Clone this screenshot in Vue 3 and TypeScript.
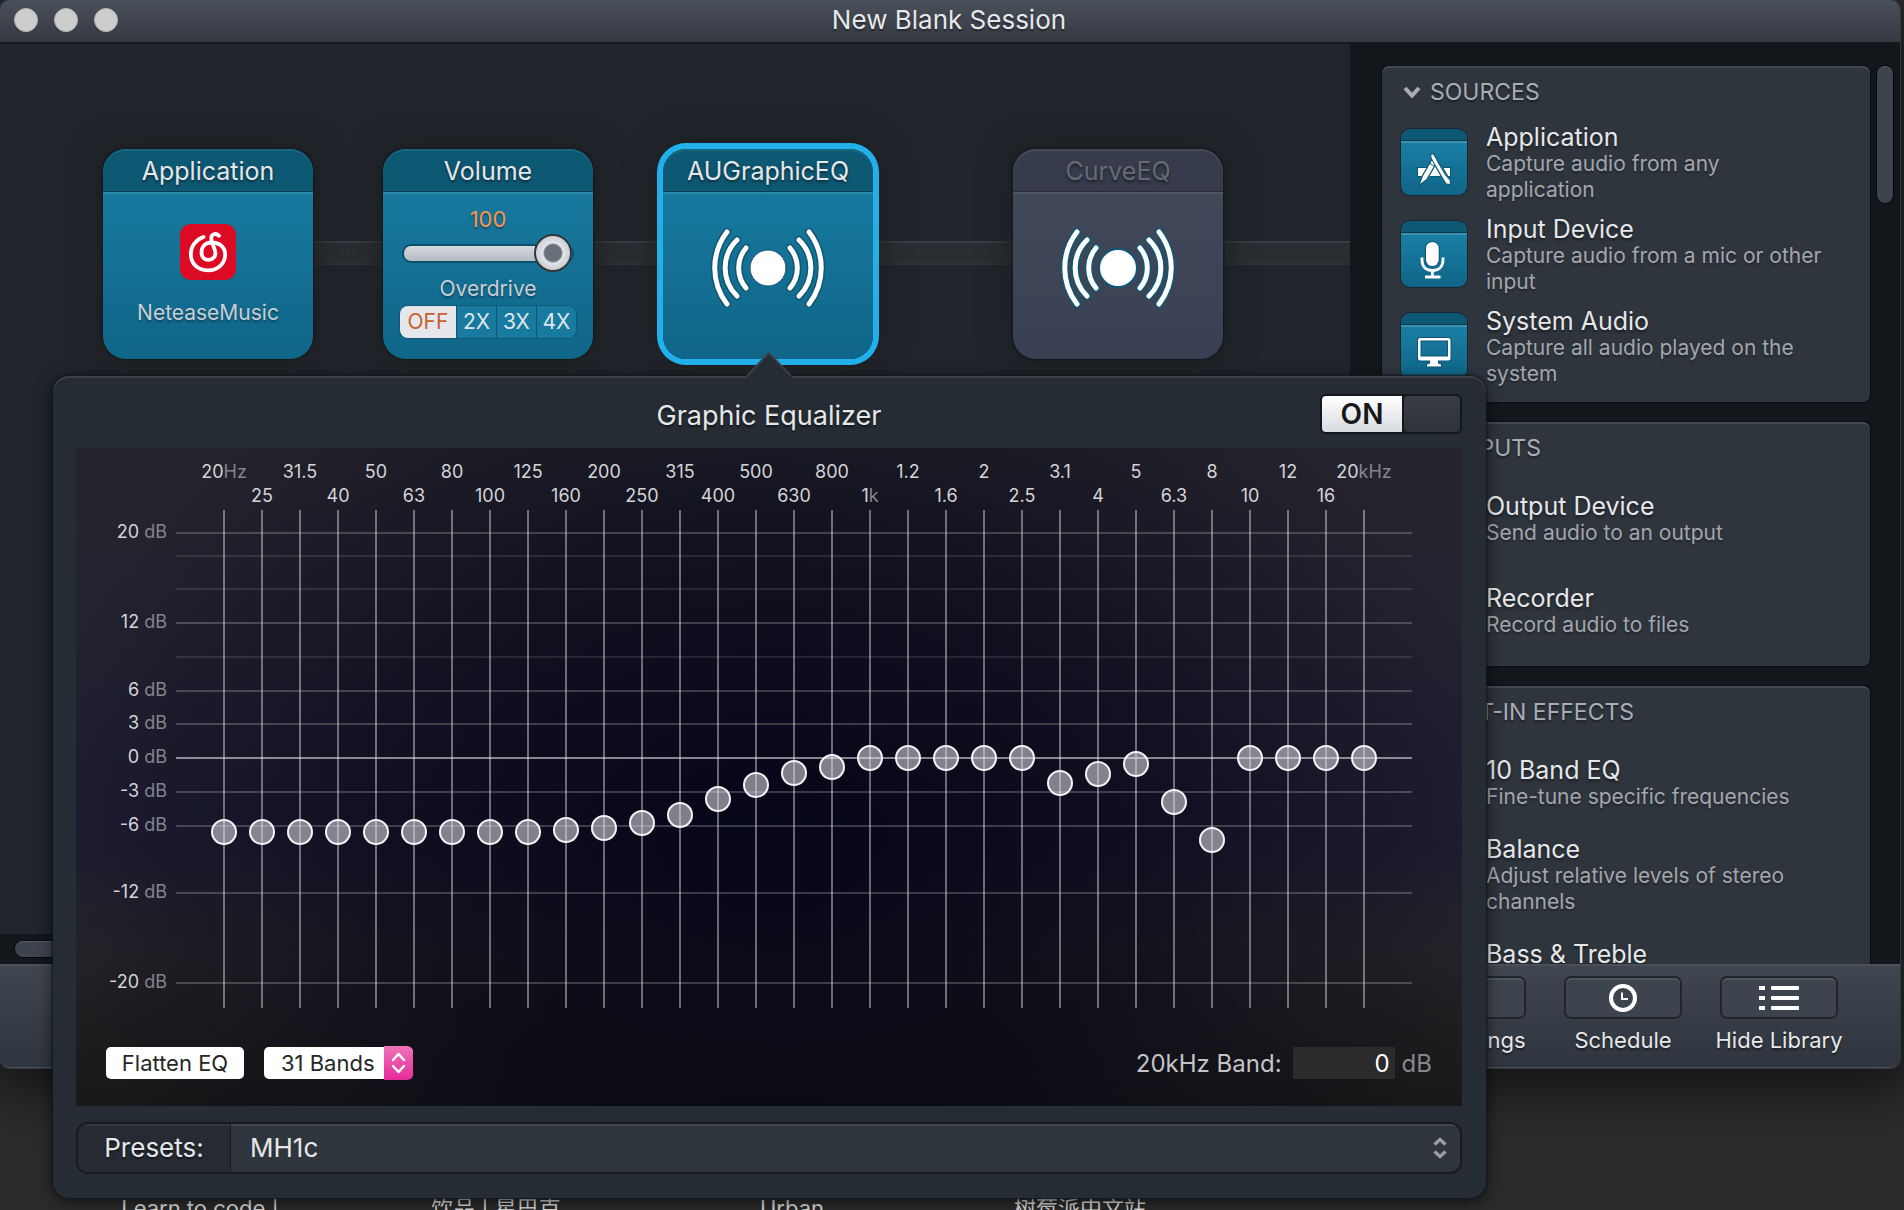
<script setup lang="ts">
import { ref } from 'vue'

interface Band { label: string; unit?: string; gain: number }
interface LibraryItem { title: string; text: string; icon: 'app' | 'mic' | 'screen' | 'blank' }
interface LibrarySection { name: string; items: LibraryItem[] }

const sections: LibrarySection[] = [
  {
    name: 'SOURCES',
    items: [
      { title: 'Application', text: 'Capture audio from any application', icon: 'app' },
      { title: 'Input Device', text: 'Capture audio from a mic or other input', icon: 'mic' },
      { title: 'System Audio', text: 'Capture all audio played on the system', icon: 'screen' },
    ],
  },
  {
    name: 'OUTPUTS',
    items: [
      { title: 'Output Device', text: 'Send audio to an output', icon: 'blank' },
      { title: 'Recorder', text: 'Record audio to files', icon: 'blank' },
    ],
  },
  {
    name: 'BUILT-IN EFFECTS',
    items: [
      { title: '10 Band EQ', text: 'Fine-tune specific frequencies', icon: 'blank' },
      { title: 'Balance', text: 'Adjust relative levels of stereo channels', icon: 'blank' },
      { title: 'Bass & Treble', text: '', icon: 'blank' },
    ],
  },
]

const bands = ref<Band[]>([
  { label: '20', unit: 'Hz', gain: -6.6 },
  { label: '25', gain: -6.6 },
  { label: '31.5', gain: -6.6 },
  { label: '40', gain: -6.6 },
  { label: '50', gain: -6.6 },
  { label: '63', gain: -6.6 },
  { label: '80', gain: -6.6 },
  { label: '100', gain: -6.6 },
  { label: '125', gain: -6.6 },
  { label: '160', gain: -6.4 },
  { label: '200', gain: -6.2 },
  { label: '250', gain: -5.8 },
  { label: '315', gain: -5.1 },
  { label: '400', gain: -3.6 },
  { label: '500', gain: -2.4 },
  { label: '630', gain: -1.3 },
  { label: '800', gain: -0.8 },
  { label: '1', unit: 'k', gain: 0 },
  { label: '1.2', gain: 0 },
  { label: '1.6', gain: 0 },
  { label: '2', gain: 0 },
  { label: '2.5', gain: 0 },
  { label: '3.1', gain: -2.2 },
  { label: '4', gain: -1.4 },
  { label: '5', gain: -0.5 },
  { label: '6.3', gain: -3.9 },
  { label: '8', gain: -7.3 },
  { label: '10', gain: 0 },
  { label: '12', gain: 0 },
  { label: '16', gain: 0 },
  { label: '20', unit: 'kHz', gain: 0 },
])

const labelled = [20, 12, 6, 3, 0, -3, -6, -12, -20]
const levels = [20, 18, 15, 12, 9, 6, 3, 0, -3, -6, -12, -20]
const levelTop = (db: number) => ({ top: `${((20 - db) / 40) * 100}%` })
const lineClass = (db: number) => (db === 0 ? 'zero' : labelled.includes(db) ? '' : 'minor')

const volume = ref(100)
const overdrive = ref('OFF')
const enabled = ref(true)
const lastBand = ref('0')
const desktopLabels = ['Learn to code |', '饮品 | 星巴克', 'Urban', '树莓派中文站']

const arcs =
  'M-41-36A59 59 0 0 0-41 36M-31-28A39 39 0 0 0-31 28M-22-20A31 31 0 0 0-22 20' +
  'M41-36A59 59 0 0 1 41 36M31-28A39 39 0 0 1 31 28M22-20A31 31 0 0 1 22 20'

function flatten() {
  bands.value.forEach((b) => (b.gain = 0))
}
</script>

<template>
  <div class="desktop">
    <main class="window">
      <header class="titlebar">
        <div class="lights">
          <button aria-label="Close"></button>
          <button aria-label="Minimize"></button>
          <button aria-label="Zoom"></button>
        </div>
        <h1>New Blank Session</h1>
      </header>

      <div class="content">
        <section class="stage">
          <div class="canvas">
            <div class="wire"></div>
            <div class="chain">
              <article class="node">
                <h2>Application</h2>
                <div class="node-body source">
                  <svg class="logo" viewBox="0 0 56 56">
                    <rect width="56" height="56" rx="11" fill="#dd0a24" />
                    <path
                      d="M23.5 13C15 16 10.8 23 10.8 30C10.8 40 18 46.3 28 46.3C38.5 46.3 45.2 39 45.2 30.5C45.2 23 39.5 18.5 31.5 18.5C25 18.5 21.5 23 21.5 28.5C21.5 33 24.5 35.8 28.5 35.8C33 35.8 36 32.5 35.3 28C35 25 31.5 19 31.3 14.5C31.2 10.2 35.5 8.5 39 11.8"
                      fill="none" stroke="#fff" stroke-width="3.8" stroke-linecap="round"
                    />
                  </svg>
                  <span>NeteaseMusic</span>
                </div>
              </article>

              <article class="node">
                <h2>Volume</h2>
                <div class="node-body volume">
                  <output for="vol">{{ volume }}</output>
                  <input id="vol" v-model.number="volume" type="range" min="0" max="100" aria-label="Volume" />
                  <span>Overdrive</span>
                  <div class="segments">
                    <button
                      v-for="o in ['OFF', '2X', '3X', '4X']" :key="o"
                      :class="{ active: overdrive === o }" @click="overdrive = o"
                    >{{ o }}</button>
                  </div>
                </div>
              </article>

              <article class="node selected">
                <h2>AUGraphicEQ</h2>
                <div class="node-body">
                  <svg class="waves" viewBox="-62 -46 124 92" fill="none" stroke-linecap="round">
                    <path :d="arcs" stroke="#0f5873" stroke-width="8" />
                    <path :d="arcs" stroke="#fff" stroke-width="5" />
                    <circle r="18" fill="#fff" stroke="#0f5873" stroke-width="1" />
                  </svg>
                </div>
              </article>

              <article class="node disabled">
                <h2>CurveEQ</h2>
                <div class="node-body">
                  <svg class="waves" viewBox="-62 -46 124 92" fill="none" stroke-linecap="round">
                    <path :d="arcs" stroke="#0f5873" stroke-width="8" />
                    <path :d="arcs" stroke="#fff" stroke-width="5" />
                    <circle r="19" fill="#fff" stroke="#0f5873" stroke-width="2" />
                  </svg>
                </div>
              </article>
            </div>
          </div>
          <div class="hscroll"><div class="thumb"></div></div>
        </section>

        <aside class="library">
          <div class="panels">
            <section v-for="s in sections" :key="s.name" class="panel">
              <h3>
                <svg viewBox="0 0 18 14"><path d="M2 3L9 10.500L16 3" fill="none" stroke="#a9adb5" stroke-width="4" /></svg>
                {{ s.name }}
              </h3>
              <div v-for="i in s.items" :key="i.title" class="item">
                <div class="tile">
                  <svg viewBox="0 0 66 66">
                    <g v-if="i.icon === 'app'">
                      <path d="M17 39H49V47H17Z" fill="#fff" stroke="#0e5570" stroke-width="2" paint-order="stroke" />
                      <path d="M32 35.500L23.500 50M35 34L44.500 50" stroke="#166f93" stroke-width="8" />
                      <path d="M34 37.500L39.500 47H28.500Z" fill="#fff" />
                      <path d="M31.500 30.500L22 47L19 55L25.500 50L35.500 32.500Z" fill="#fff" stroke="#0e5570" stroke-width="2" paint-order="stroke" />
                      <path d="M29 34.500L33 37" stroke="#0e6283" stroke-width="1" />
                      <path d="M31 25C33 26 34.500 29 35.500 31.500L44 46L48.800 51.500V55L45.500 54.500L42 49L32 31.500C30.500 29 29.500 26.500 31 25Z" fill="#fff" stroke="#0e5570" stroke-width="2" paint-order="stroke" />
                    </g>
                    <g v-else-if="i.icon === 'mic'" fill="none" stroke="#fff" stroke-width="2.800">
                      <rect x="25" y="21" width="12.700" height="24" rx="6.350" fill="#fff" stroke="#0e5570" stroke-width="2" paint-order="stroke" />
                      <path d="M21 36.500V39C21 46 25.500 49.500 31.400 49.500S42 46 42 39V36.500M31.400 49.500V56M24 56H39.500" />
                    </g>
                    <g v-else-if="i.icon === 'screen'" stroke="#0e5570" stroke-width="2" fill="#fff" paint-order="stroke" fill-rule="evenodd">
                      <path d="M19 25H47.500Q49.500 25 49.500 27V45.500Q49.500 47.500 47.500 47.500H37V50.500L40 51.500V53.500H26V51.500L29 50.500V47.500H19Q17 47.500 17 45.500V27Q17 25 19 25ZM19.500 27.500V43.500H47V27.500Z" />
                    </g>
                  </svg>
                </div>
                <div class="copy">
                  <h4>{{ i.title }}</h4>
                  <p>{{ i.text }}</p>
                </div>
              </div>
            </section>
          </div>
          <div class="vscroll"><div class="thumb"></div></div>
        </aside>
      </div>

      <footer class="toolbar">
        <div class="tool">
          <button aria-labelledby="l-rec"></button>
          <span id="l-rec">Recordings</span>
        </div>
        <div class="tool">
          <button aria-labelledby="l-sch">
            <svg viewBox="0 0 40 32">
              <circle cx="20" cy="16" r="12" fill="none" stroke="#fff" stroke-width="4" />
              <path d="M19 10.500V17H25" fill="none" stroke="#fff" stroke-width="2" />
            </svg>
          </button>
          <span id="l-sch">Schedule</span>
        </div>
        <div class="tool">
          <button aria-labelledby="l-lib">
            <svg viewBox="0 0 40 32" fill="#fff">
              <path d="M0 4H6V8H0ZM0 14H6V18H0ZM0 24H6V28H0Z" />
              <rect x="12" y="4" width="28" height="4" rx="1" />
              <rect x="12" y="14" width="28" height="4" rx="1" />
              <rect x="12" y="24" width="28" height="4" rx="1" />
            </svg>
          </button>
          <span id="l-lib">Hide Library</span>
        </div>
      </footer>

      <section class="popover" aria-label="Graphic Equalizer">
        <svg class="arrow" viewBox="0 0 46 26">
          <path d="M0 26L1 24L23 1L45 24L46 26Z" fill="#262c34" />
          <path d="M1 24L23 1L45 24" fill="none" stroke="#3b4048" stroke-width="2" />
        </svg>
        <header class="pop-head">
          <h2>Graphic Equalizer</h2>
          <button class="switch" role="switch" :aria-checked="enabled" @click="enabled = !enabled">
            <span class="on">ON</span><span class="rest"></span>
          </button>
        </header>

        <div class="plot">
          <div class="graph">
            <div class="scale">
              <div class="axis">
                <span v-for="db in labelled" :key="db" :style="levelTop(db)">{{ db }} <i>dB</i></span>
              </div>
            </div>
            <div class="field">
              <div class="axis">
                <div v-for="db in levels" :key="db" class="level" :class="lineClass(db)" :style="levelTop(db)"></div>
              </div>
              <div class="bands">
                <label v-for="(b, n) in bands" :key="n" class="band" :class="{ low: n % 2 === 1 }">
                  <span class="freq">{{ b.label }}<i v-if="b.unit">{{ b.unit }}</i></span>
                  <span class="slot">
                    <input v-model.number="b.gain" type="range" min="-20" max="20" step="0.1" />
                  </span>
                </label>
              </div>
            </div>
          </div>

          <div class="controls">
            <button class="flatten" @click="flatten">Flatten EQ</button>
            <div class="band-count">
              <select aria-label="Number of bands"><option>31 Bands</option></select>
              <span class="stepper">
                <svg viewBox="0 0 29 34"><path d="M9 14L14.500 8L20 14M9 20L14.500 26L20 20" fill="none" stroke="#fff" stroke-width="2.500" stroke-linecap="round" stroke-linejoin="round" /></svg>
              </span>
            </div>
            <label class="gain" for="gain">20kHz Band:</label>
            <input id="gain" v-model="lastBand" type="text" />
            <span class="unit">dB</span>
          </div>
        </div>

        <div class="presets">
          <label for="preset">Presets:</label>
          <div class="preset-pick">
            <select id="preset"><option>MH1c</option></select>
            <svg viewBox="0 0 14 24"><path d="M1.500 8.500L7 3.500L12.500 8.500M1.500 15.500L7 20.500L12.500 15.500" fill="none" stroke="#989ba1" stroke-width="3.500" /></svg>
          </div>
        </div>
      </section>
    </main>

    <div class="desk-icons">
      <span v-for="d in desktopLabels" :key="d">{{ d }}</span>
    </div>
  </div>
</template>

<style>
body {
  margin: 0;
  background: #2a2a2a;
}
</style>

<style scoped>
* {
  box-sizing: border-box;
}
.desktop {
  display: grid;
  grid-template-rows: minmax(0, 1fr) 142px;
  height: 100vh;
  min-width: 1500px;
  overflow: hidden;
  background: #2b2b2b;
  color: #e6e7e9;
  font-family: Inter, "Noto Sans CJK SC", sans-serif;
  font-size: 24px;
}
button, select, input {
  margin: 0;
  padding: 0;
  border: 0;
  font: inherit;
  color: inherit;
}
h1, h2, h3, h4, p {
  margin: 0;
  font-weight: 400;
}
i {
  font-style: normal;
}

.window {
  position: relative;
  display: flex;
  flex-direction: column;
  min-height: 0;
  margin-right: 4px;
  border-radius: 10px;
  background: #13161b;
  box-shadow: 0 0 0 1px #34373b, 0 16px 50px 8px rgba(0, 0, 0, 0.5);
}
.titlebar {
  display: flex;
  align-items: center;
  flex: none;
  height: 44px;
  padding-bottom: 2px;
  border-bottom: 2px solid #14171c;
  border-radius: 10px 10px 0 0;
  background: linear-gradient(#4a505b, #343942);
}
.lights {
  display: flex;
  gap: 16px;
  width: 120px;
  padding-left: 14px;
}
.lights button {
  width: 24px;
  height: 24px;
  border: 1px solid #b4b5b7;
  border-radius: 50%;
  background: #cdcdcd;
}
.titlebar h1 {
  flex: 1;
  padding-right: 122px;
  text-align: center;
  font-size: 26px;
  line-height: 40px;
  text-shadow: 0 2px 2px rgba(0, 0, 0, 0.4);
}

.content {
  display: flex;
  flex: 1;
  min-height: 0;
}
.stage {
  display: flex;
  flex: 1;
  flex-direction: column;
  min-width: 0;
}
.canvas {
  position: relative;
  flex: 1;
  overflow: hidden;
  background: #20242b;
}
.wire {
  position: absolute;
  top: 197px;
  right: 0;
  left: 208px;
  height: 24px;
  border-top: 2px solid #3b3d42;
  border-bottom: 2px solid #303338;
  background: #2a2d32;
}
.chain {
  position: relative;
  display: flex;
  gap: 70px;
  padding: 105px 0 0 103px;
}
.node {
  flex: none;
  width: 210px;
  height: 210px;
  overflow: hidden;
  border-radius: 23px;
  background: linear-gradient(#197da3, #0f6688);
  box-shadow: 0 0 2px 1px #14181c, 0 0 26px 8px rgba(30, 32, 32, 0.9);
}
.node h2 {
  height: 43px;
  border-bottom: 1px solid #0a3b4e;
  background: #0d5873;
  box-shadow: inset 0 2px 1px #1a6680;
  border-radius: 23px 23px 0 0;
  text-align: center;
  font-size: 25px;
  line-height: 44px;
  text-shadow: 0 2px 3px rgba(0, 0, 0, 0.5);
}
.node-body {
  display: flex;
  flex-direction: column;
  align-items: center;
  height: 167px;
  border-top: 2px solid #2e89ab;
  color: #c9ced6;
  font-size: 21px;
  line-height: 26px;
  text-shadow: 0 2px 2px rgba(0, 0, 0, 0.35);
}
.node.selected {
  box-shadow: 0 0 0 6px #22b0ed, 0 0 26px 12px rgba(30, 32, 32, 0.9);
}
.node.disabled {
  margin-left: 70px;
  background: linear-gradient(#434a5a, #394053);
}
.disabled h2 {
  border-color: #292d3a;
  background: #373c4c;
  box-shadow: inset 0 2px 1px #454b5a;
  color: #666a74;
}
.disabled .node-body {
  border-color: #4d5463;
}
.logo {
  width: 56px;
  height: 56px;
  margin: 30px 0 20px;
}
.waves {
  width: 124px;
  height: 92px;
  margin-top: 28px;
}
.volume output {
  margin-top: 12px;
  color: #f9944b;
  font-size: 22px;
}
.volume input {
  width: 172px;
  height: 38px;
  margin: 2px 0 4px;
  appearance: none;
  background: transparent;
}
.volume input::-webkit-slider-runnable-track {
  height: 19px;
  border: 2px solid #0d506b;
  border-radius: 9px;
  background: linear-gradient(#d6dae0, #b4bac2);
}
.volume input::-webkit-slider-thumb {
  width: 38px;
  height: 38px;
  margin-top: -12px;
  appearance: none;
  border: 2px solid #32363b;
  border-radius: 50%;
  background: radial-gradient(circle, #67707b 0 8px, #8a9098 9px, #e2e5e9 10px, #c6cbd1 18px);
}
.segments {
  display: flex;
  height: 34px;
  margin-top: 3px;
  overflow: hidden;
  border: 1px solid #0f5773;
  border-radius: 9px;
}
.segments button {
  width: 40px;
  border-left: 1px solid #0f5773;
  background: #187a9f;
  color: #dfe5ec;
  font-size: 21px;
}
.segments button.active {
  width: 56px;
  border: 0;
  background: #e5e7ec;
  color: #c8602c;
}
.hscroll {
  height: 30px;
  padding: 7px 12px 7px 15px;
  background: #13161b;
}
.thumb {
  height: 16px;
  border-radius: 8px;
  border-top: 1px solid #585d66;
  background: #3e444e;
  box-shadow: 0 0 0 1px #08090b;
}

.library {
  display: flex;
  width: 550px;
  padding: 22px 7px 0 32px;
  overflow: hidden;
}
.panels {
  flex: 1;
}
.panel {
  margin-bottom: 20px;
  padding: 0 19px 10px;
  border-radius: 7px;
  background: #2f353d;
  box-shadow: inset 0 2px 0 #444951, 0 0 0 1px #0a0c0f;
}
.panel h3 {
  display: flex;
  align-items: center;
  gap: 9px;
  height: 50px;
  padding: 2px 0 0 2px;
  color: #a9adb6;
  font-size: 23px;
  text-shadow: 0 2px 2px rgba(0, 0, 0, 0.4);
}
.panel h3 svg {
  width: 18px;
  height: 14px;
}
.item {
  display: flex;
  align-items: center;
  gap: 19px;
  height: 92px;
}
.tile {
  flex: none;
  width: 66px;
  height: 66px;
  border-radius: 9px;
  background: linear-gradient(#0d5873 0 11px, #0a3b4e 11px 12px, #3a90af 12px 14px, #1a7ea4 14px, #0f6587);
  box-shadow: 0 0 0 1px #1c262e;
}
.copy {
  flex: 1;
  padding: 2px 20px 0 0;
}
.copy h4 {
  font-size: 25px;
  line-height: 28px;
  text-shadow: 0 2px 3px rgba(0, 0, 0, 0.5);
}
.copy p {
  min-height: 26px;
  color: #a3a6ac;
  font-size: 21px;
  line-height: 26px;
  text-shadow: 0 2px 2px rgba(0, 0, 0, 0.3);
}
.vscroll {
  width: 23px;
  padding-left: 7px;
}
.vscroll .thumb {
  height: 137px;
}

.toolbar {
  display: flex;
  justify-content: flex-end;
  flex: none;
  height: 104px;
  padding: 10px 43px 0 0;
  border-top: 2px solid #4a505a;
  border-bottom: 1px solid #4a5059;
  border-radius: 0 0 10px 10px;
  background: linear-gradient(#40464f, #2f353e);
}
.tool {
  display: flex;
  flex-direction: column;
  align-items: center;
  width: 156px;
  font-size: 22px;
  line-height: 26px;
  text-shadow: 0 2px 2px rgba(0, 0, 0, 0.5);
}
.tool button {
  display: grid;
  place-items: center;
  width: 118px;
  height: 43px;
  margin-bottom: 8px;
  border: 2px solid #22262c;
  border-radius: 7px;
  background: #3e444e;
  box-shadow: inset 0 2px 0 #4f555e;
}
.tool svg {
  width: 40px;
  height: 32px;
}

.popover {
  position: absolute;
  top: 376px;
  right: 414px;
  left: 53px;
  padding: 0 24px 24px 23px;
  border-radius: 16px;
  background: #252c33;
  box-shadow: inset 0 2px 0 #3b4048, 0 0 2px 1px #14171b, 0 4px 16px rgba(0, 0, 0, 0.6);
}
.arrow {
  position: absolute;
  top: -24px;
  left: 50%;
  width: 46px;
  height: 26px;
  margin-left: -24px;
}
.pop-head {
  display: grid;
  grid-template-columns: 142px 1fr 142px;
  align-items: center;
  height: 72px;
  padding-top: 4px;
}
.pop-head h2 {
  grid-column: 2;
  text-align: center;
  font-size: 27px;
  line-height: 36px;
  padding-top: 4px;
  text-shadow: 0 2px 2px rgba(0, 0, 0, 0.5);
}
.switch {
  display: flex;
  height: 40px;
  border: 2px solid #14161a;
  border-radius: 6px;
  overflow: hidden;
  background: #14161a;
}
.switch .on {
  width: 80px;
  background: linear-gradient(#fff, #d8dbdf);
  color: #16181b;
  font-size: 28px;
  font-weight: 600;
  line-height: 36px;
}
.switch .rest {
  flex: 1;
  margin-left: 2px;
  border-radius: 4px 0 0 4px;
  background: linear-gradient(#3a3d45, #2f323a);
}

.plot {
  background:
    radial-gradient(ellipse 54% 90% at 50% 60%, rgba(2, 2, 20, 0.82) 10%, rgba(2, 2, 18, 0.55) 50%, rgba(2, 2, 18, 0) 100%),
    linear-gradient(rgba(0, 0, 0, 0) 75%, rgba(0, 0, 0, 0.35)),
    linear-gradient(#25242d, #232230 30%, #1f1e33 58%, #262529 78%, #242425);
}
.graph {
  display: grid;
  grid-template-columns: 100px 1fr 50px;
  height: 560px;
  color: #d4d4d8;
  font-size: 18px;
}
.graph i {
  color: #85858e;
}
.scale, .field {
  position: relative;
}
.axis {
  position: absolute;
  top: 85px;
  right: 0;
  bottom: 25px;
  left: 0;
}
.scale span {
  position: absolute;
  right: 9px;
  margin-top: -12px;
  line-height: 22px;
  white-space: nowrap;
}
.level {
  position: absolute;
  right: 0;
  left: 0;
  height: 2px;
  margin-top: -1px;
  background: rgba(255, 255, 255, 0.2);
}
.level.minor {
  background: rgba(255, 255, 255, 0.1);
}
.level.zero {
  background: rgba(255, 255, 255, 0.5);
}
.bands {
  position: relative;
  display: flex;
  height: 100%;
  padding: 12px 29px 0;
}
.band {
  display: flex;
  flex: 1 1 0;
  flex-direction: column;
  align-items: center;
  min-width: 0;
}
.freq {
  height: 50px;
  line-height: 24px;
  white-space: nowrap;
}
.low .freq {
  padding-top: 24px;
}
.slot {
  display: flex;
  flex: 1;
  justify-content: center;
  padding-top: 10px;
  width: 26px;
  background: linear-gradient(rgba(225, 225, 230, 0.45), rgba(225, 225, 230, 0.45)) center / 2px 100% no-repeat;
}
.slot input {
  width: 26px;
  height: 476px;
  appearance: none;
  background: transparent;
  writing-mode: vertical-lr;
  direction: rtl;
}
.slot input::-webkit-slider-thumb {
  width: 26px;
  height: 26px;
  appearance: none;
  border: 2px solid #f4f4f6;
  border-radius: 50%;
  background: rgba(225, 225, 232, 0.55);
}
.controls {
  display: flex;
  align-items: center;
  height: 98px;
  padding: 38px 30px 26px;
}
.flatten {
  width: 138px;
  height: 32px;
  border-radius: 5px;
  background: #fff;
  color: #262626;
  font-size: 22px;
  line-height: 32px;
}
.band-count {
  position: relative;
  width: 149px;
  margin-left: 20px;
}
.band-count select {
  display: block;
  width: 149px;
  height: 32px;
  padding-left: 17px;
  appearance: none;
  border-radius: 5px;
  background: #fff;
  color: #262626;
  font-size: 22px;
}
.stepper {
  position: absolute;
  top: -1px;
  right: 0;
  width: 29px;
  height: 34px;
  border-radius: 0 6px 6px 0;
  background: linear-gradient(#ee74b9, #e72a98);
  pointer-events: none;
}
.gain {
  margin-left: auto;
  color: #c4c4c8;
}
.controls input {
  width: 102px;
  height: 32px;
  margin: 0 7px 0 11px;
  padding-right: 5px;
  background: #2b2b2c;
  color: #fff;
  text-align: right;
}
.unit {
  color: #87878a;
}

.presets {
  display: flex;
  height: 52px;
  margin-top: 16px;
  overflow: hidden;
  border: 2px solid #171b20;
  border-radius: 12px;
  background: #2f353d;
  font-size: 26px;
  line-height: 48px;
  text-shadow: 0 2px 2px rgba(0, 0, 0, 0.5);
}
.presets label {
  width: 153px;
  border-right: 1px solid #14171b;
  background: #262b33;
  box-shadow: inset 0 2px 0 #33383f;
  text-align: center;
}
.preset-pick {
  position: relative;
  flex: 1;
  box-shadow: inset 0 2px 0 #41474f;
}
.preset-pick select {
  width: 100%;
  height: 48px;
  padding-left: 19px;
  appearance: none;
  background: transparent;
}
.preset-pick svg {
  position: absolute;
  top: 12px;
  right: 13px;
  width: 14px;
  height: 24px;
  pointer-events: none;
}

.desk-icons {
  display: grid;
  grid-template-columns: 296px 296px 296px 280px;
  padding: 126px 0 0 52px;
  color: #dcdcdc;
  font-size: 22px;
  line-height: 28px;
  text-align: center;
  white-space: nowrap;
}
</style>
